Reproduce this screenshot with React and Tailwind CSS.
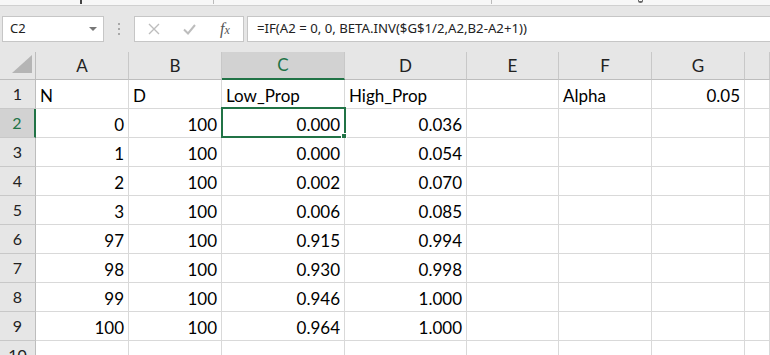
import React from "react";

const cols = ["A", "B", "C", "D", "E", "F", "G", ""];
const widths = "grid-cols-[36px_93px_93px_123px_122px_92px_93px_93px_25px]";

const data = [
  [0, 100, "0.000", "0.036"],
  [1, 100, "0.000", "0.054"],
  [2, 100, "0.002", "0.070"],
  [3, 100, "0.006", "0.085"],
  [97, 100, "0.915", "0.994"],
  [98, 100, "0.930", "0.998"],
  [99, 100, "0.946", "1.000"],
  [100, 100, "0.964", "1.000"],
];

function Cell({ children, right, className = "" }) {
  return (
    <div
      className={
        "h-[29px] border-r border-b border-[#d9d9d9] flex items-end pb-[2px] overflow-visible whitespace-nowrap text-[17px] leading-[20px] " +
        (right ? "justify-end pr-[4px] " : "pl-[4px] ") +
        className
      }
    >
      {children}
    </div>
  );
}

function RowHead({ n, selected }) {
  return (
    <div
      className={
        "h-[29px] border-b border-[#c8c8c8] flex items-center justify-center text-[16px] " +
        (selected
          ? "bg-[#d2d2d2] text-[#217346] border-r-2 border-r-[#217346]"
          : "bg-[#e6e6e6] text-[#222] border-r border-r-[#bdbdbd]")
      }
    >
      {n}
    </div>
  );
}

export default function App() {
  return (
    <div
      className="w-[770px] h-[355px] overflow-hidden bg-white text-black"
      style={{ fontFamily: "Lato, 'Liberation Sans', sans-serif" }}
    >
      {/* top strip */}
      <div className="h-[6px] bg-[#f7f7f7] border-b border-[#d0d0d0] flex items-start">
        <div className="w-[80px]" />
        <div className="w-[2px] h-[4px] bg-[#444]" />
        <div className="w-[131px]" />
        <div className="w-[1px] h-[4px] bg-[#bbb]" />
        <div className="w-[277px]" />
        <div className="w-[1px] h-[4px] bg-[#bbb]" />
        <div className="w-[146px]" />
        <div className="w-[5px] h-[3px] border-b-2 border-l border-r border-[#666] rounded-b-[3px]" />
      </div>

      {/* formula bar */}
      <div className="h-[46px] bg-[#e6e6e6] flex items-start pt-[10px]">
        <div className="ml-[2px] w-[102px] h-[26px] bg-white border border-[#c6c6c6] flex items-center justify-between pl-[7px] pr-[6px]">
          <span
            className="text-[13px] text-[#222]"
            style={{ fontFamily: "'Noto Sans', 'Open Sans', sans-serif" }}
          >
            C2
          </span>
          <span className="w-0 h-0 border-l-[4px] border-r-[4px] border-t-[4px] border-l-transparent border-r-transparent border-t-[#777]" />
        </div>
        <div className="w-[30px] h-[26px] flex flex-col items-center justify-center gap-[3px]">
          <span className="w-[2px] h-[2px] bg-[#a8a8a8]" />
          <span className="w-[2px] h-[2px] bg-[#a8a8a8]" />
          <span className="w-[2px] h-[2px] bg-[#a8a8a8]" />
        </div>
        <div className="w-[110px] h-[26px] bg-white border border-[#c6c6c6] flex items-center">
          <svg width="12" height="12" viewBox="0 0 12 12" className="ml-[13px]">
            <path d="M1 1 L11 11 M11 1 L1 11" stroke="#bdbdbd" strokeWidth="1.4" fill="none" />
          </svg>
          <svg width="13" height="11" viewBox="0 0 13 11" className="ml-[23px]">
            <path d="M1 5.5 L5 9.5 L12 1" stroke="#bdbdbd" strokeWidth="2" fill="none" />
          </svg>
          <span
            className="ml-[24px] text-[#555] italic leading-none"
            style={{ fontFamily: "'Liberation Serif', serif" }}
          >
            <span className="text-[16px]">f</span>
            <span className="text-[12px]">x</span>
          </span>
        </div>
        <div className="ml-[3px] flex-1 h-[26px] bg-white border border-[#c6c6c6] border-r-0 flex items-center pl-[9px]">
          <span
            className="text-[13.2px] text-[#222] whitespace-nowrap"
            style={{ fontFamily: "'Noto Sans', 'Open Sans', sans-serif" }}
          >
            =IF(A2 = 0, 0, BETA.INV($G$1/2,A2,B2-A2+1))
          </span>
        </div>
      </div>

      {/* grid */}
      <div className={"grid " + widths}>
        {/* header row */}
        <div className="h-[28px] bg-[#e6e6e6] border-r border-b border-[#bdbdbd] flex items-end justify-end pr-[3px] pb-[6px]">
          <svg width="20" height="18" viewBox="0 0 20 18">
            <path d="M20 0 L20 18 L0 18 Z" fill="#b5b5b5" />
          </svg>
        </div>
        {cols.map((c, i) => (
          <div
            key={i}
            className={
              "h-[28px] flex items-center justify-center border-r border-r-[#c8c8c8] text-[17px] " +
              (c === "C"
                ? "bg-[#d2d2d2] text-[#217346] border-b-2 border-b-[#217346]"
                : "bg-[#e6e6e6] text-[#222] border-b border-b-[#bdbdbd]")
            }
          >
            {c}
          </div>
        ))}

        {/* row 1 */}
        <RowHead n={1} />
        <Cell>N</Cell>
        <Cell>D</Cell>
        <Cell>Low_Prop</Cell>
        <Cell>High_Prop</Cell>
        <Cell />
        <Cell>Alpha</Cell>
        <Cell right>0.05</Cell>
        <Cell />

        {data.map((r, i) => (
          <React.Fragment key={i}>
            <RowHead n={i + 2} selected={i === 0} />
            <Cell right>{r[0]}</Cell>
            <Cell right>{r[1]}</Cell>
            <Cell right className="relative">
              {i === 0 && (
                <div className="absolute left-[-1px] top-[-2px] w-[125px] h-[31px] border-2 border-[#217346]">
                  <div className="absolute right-[-3px] bottom-[-3px] w-[6px] h-[6px] bg-[#217346] border border-white" />
                </div>
              )}
              {r[2]}
            </Cell>
            <Cell right>{r[3]}</Cell>
            <Cell />
            <Cell />
            <Cell />
            <Cell />
          </React.Fragment>
        ))}

        {/* row 10 */}
        <RowHead n={10} />
        <Cell />
        <Cell />
        <Cell />
        <Cell />
        <Cell />
        <Cell />
        <Cell />
        <Cell />
      </div>
    </div>
  );
}
